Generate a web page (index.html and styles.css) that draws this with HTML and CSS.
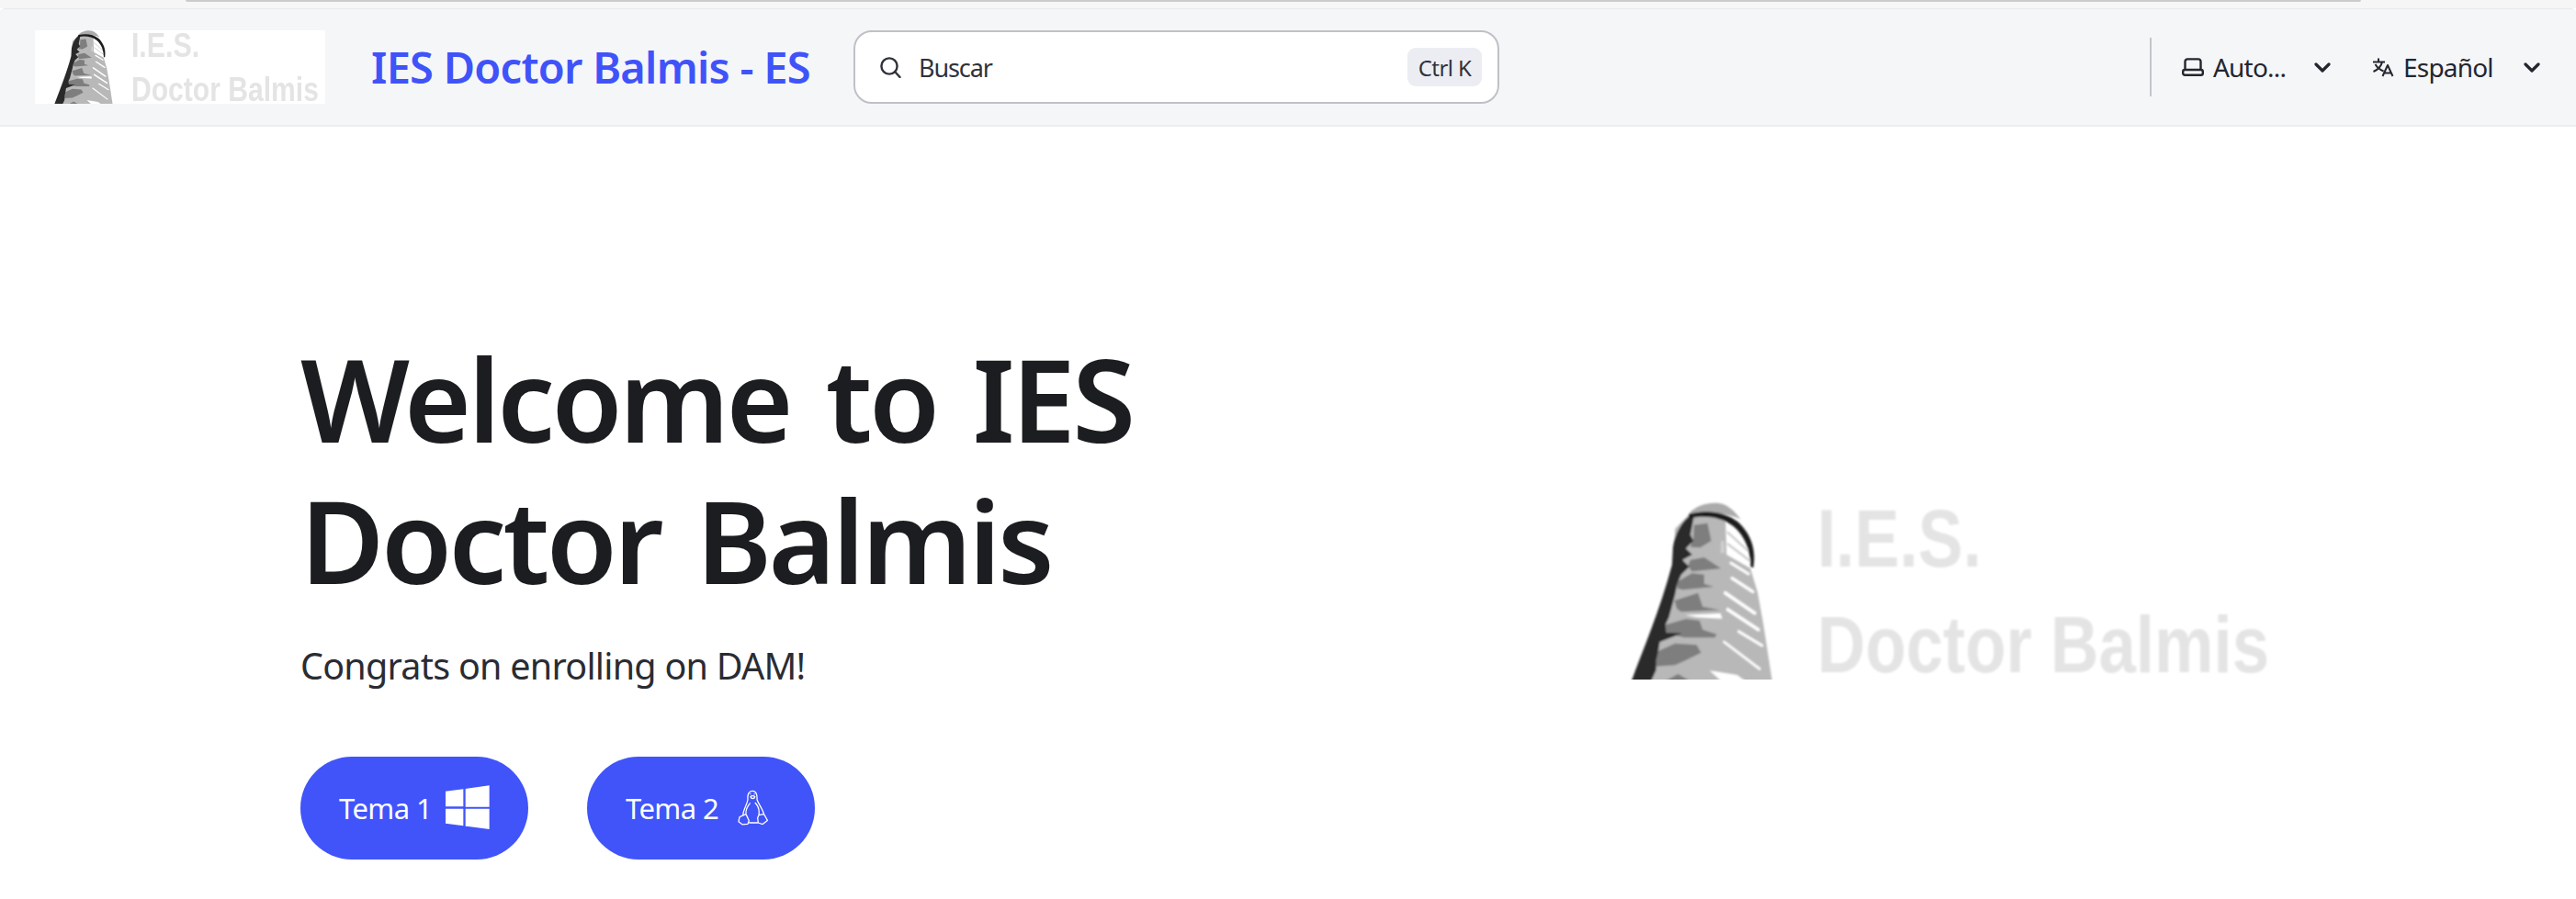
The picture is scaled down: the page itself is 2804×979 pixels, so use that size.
FILE: index.html
```html
<!DOCTYPE html>
<html lang="es">
<head>
<meta charset="utf-8">
<title>IES Doctor Balmis - ES</title>
<link rel="stylesheet" href="styles.css">
</head>
<body>
<svg class="defs" width="0" height="0" aria-hidden="true">
  <defs>
    <filter id="soft" x="-5%" y="-5%" width="110%" height="110%"><feGaussianBlur stdDeviation="3"/></filter>
    <filter id="softtext" x="-5%" y="-5%" width="110%" height="110%"><feGaussianBlur stdDeviation="1"/></filter>
    <symbol id="tower" viewBox="0 0 600 603">
      <g filter="url(#soft)">
        <path fill="#b8b8b8" d="M48 640 185 220 190 110 240 60 300 50 355 85 358 195 436 240 460 320 478 420 492 510 512 640Z"/>
        <path fill="#ababab" d="M238 58C262 30 320 18 352 32 372 42 392 60 404 80 360 58 290 55 238 72Z"/>
        <g fill="none" stroke="#c6c6c6" stroke-linecap="round">
          <path stroke-width="6" d="M362 122 428 182"/>
          <path stroke-width="6" d="M362 160 434 215"/>
        </g>
        <g fill="none" stroke="#fff" stroke-linecap="round">
          <path stroke-width="9" d="M372 222 430 258"/>
          <path stroke-width="10" d="M376 272 444 316"/>
          <path stroke-width="11" d="M354 320 450 386"/>
          <path stroke-width="11" d="M362 374 462 440"/>
          <path stroke-width="9" d="M398 446 474 492"/>
          <path stroke-width="8" d="M350 480 466 568"/>
        </g>
        <g fill="#fff">
          <path d="M303 574 392 588 425 612 345 612Z"/>
          <path d="M222 392 338 387 344 404 262 400Z"/>
        </g>
        <path fill="#cfcfcf" d="M340 150 350 150 352 190 338 190Z"/>
        <g fill="#7e7e7e">
          <path d="M252 98 296 92 308 150 272 172 240 170 250 140Z"/>
          <path d="M240 212 285 204 340 240 245 250 232 232Z"/>
          <path d="M195 285 245 256 285 260 285 290 316 300 215 310 198 305Z"/>
          <path d="M188 345 265 320 280 365 336 376 210 382 196 372Z"/>
          <path d="M155 425 225 405 270 410 280 440 326 455 320 466 220 466 165 452Z"/>
          <path d="M135 510 190 485 260 490 275 515 225 540 190 556 125 560 120 530Z"/>
          <path d="M150 612 200 585 245 612Z"/>
        </g>
        <path fill="#2b2b2b" d="M46 612C85 505 140 380 180 228L183 170C190 125 212 85 245 62L252 68 240 130 250 150 225 175 246 195 214 212 236 235 210 260 197 290 190 325 170 400 158 425 162 450 212 452 140 480 135 510 128 540 128 572 110 612Z"/>
        <path fill="#1c1c1c" d="M235 62C290 48 350 52 395 88 432 122 456 170 446 236L437 236C437 180 415 130 380 102 340 72 290 66 235 76Z"/>
      </g>
    </symbol>
  </defs>
</svg>

<div class="chrome-strip"><div class="chrome-line"></div></div>

<header class="navbar">
  <a class="brand-logo">
    <svg class="logo-small" viewBox="0 0 762 193" role="img" aria-label="Logo">
      <rect width="762" height="193" fill="#fff"/>
      <use href="#tower" x="35" y="-8" width="200" height="201"/>
      <g class="logo-text" filter="url(#softtext)">
        <text x="253" y="70" font-size="89" textLength="179" lengthAdjust="spacingAndGlyphs">I.E.S.</text>
        <text x="253" y="185" font-size="87" textLength="492" lengthAdjust="spacingAndGlyphs">Doctor Balmis</text>
      </g>
    </svg>
  </a>
  <span class="site-title">IES Doctor Balmis - ES</span>
  <div class="search">
    <svg class="search-icon" viewBox="0 0 24 24" aria-hidden="true"><circle cx="11" cy="11" r="8.6"/><path d="m17.5 17.5 5 5.5"/></svg>
    <span class="search-label">Buscar</span>
    <kbd class="search-key">Ctrl K</kbd>
  </div>
  <div class="nav-right">
    <div class="divider"></div>
    <div class="picker picker-theme">
      <svg class="laptop" viewBox="0 0 24 20" aria-hidden="true"><path d="M3.5 13V4a2.6 2.6 0 0 1 2.6-2.6h11.8A2.6 2.6 0 0 1 20.500 4v9"/><rect x="1.200" y="13" width="21.600" height="5.800" rx="2"/></svg>
      <span class="picker-text">Auto...</span>
      <svg class="chev" viewBox="0 0 18 11" aria-hidden="true"><path d="m2 2 7 7 7-7"/></svg>
    </div>
    <div class="picker picker-lang">
      <svg class="translate" viewBox="0 0 24 22" aria-hidden="true"><path d="M1 5.500h13M7 1.500v4M11 5.500C10 10 6 14 1.500 16M3.500 8c2 3.500 5 6 9 7.500M11.500 21 17 9l5.500 12M13.500 17.500h7"/></svg>
      <span class="picker-text">Español</span>
      <svg class="chev" viewBox="0 0 18 11" aria-hidden="true"><path d="m2 2 7 7 7-7"/></svg>
    </div>
  </div>
</header>

<main class="hero">
  <div class="hero-copy">
    <h1 class="hero-title">Welcome to IES<br>Doctor Balmis</h1>
    <p class="hero-sub">Congrats on enrolling on DAM!</p>
    <div class="hero-actions">
      <a class="btn">
        <span>Tema 1</span>
        <svg class="win" viewBox="75 80 144 144" aria-hidden="true"><path d="M75 100 133 93V150H75ZM140 92 218 81V151H140ZM75 157H133V213L75 205ZM140 157H218V224L140 214Z"/></svg>
      </a>
      <a class="btn btn-tux">
        <span>Tema 2</span>
        <svg class="tux" viewBox="72 62 102 118" aria-hidden="true"><path d="M90 146C90 130 103 112 106 94 104 76 110 65 122 65 134 65 138 78 137 94 142 110 156 125 160 143M100 142C98 128 106 115 114 105M143 145C146 128 138 112 130 104M85 149 100 143 110 165 106 176 88 178 75 168 78 153ZM143 146 160 143 165 151 172 164 156 177 141 172 139 156ZM110 172H140M115 84C118 80 127 80 130 84 128 92 118 94 115 84ZM115 74V77M128 74V77"/></svg>
      </a>
    </div>
  </div>
  <svg class="hero-image" viewBox="0 0 762 193" role="img" aria-label="IES Doctor Balmis">
    <use href="#tower" x="35" y="-8" width="200" height="201"/>
    <g class="logo-text" filter="url(#softtext)">
      <text x="253" y="70" font-size="89" textLength="179" lengthAdjust="spacingAndGlyphs">I.E.S.</text>
      <text x="253" y="185" font-size="87" textLength="492" lengthAdjust="spacingAndGlyphs">Doctor Balmis</text>
    </g>
  </svg>
</main>
</body>
</html>
```

FILE: styles.css
```css
* { box-sizing: border-box; }
html, body { margin: 0; height: 100%; }
body {
  height: 979px;
  overflow: hidden;
  background: #fff;
  color: #1c1d20;
  font-family: "Noto Sans", "Open Sans", sans-serif;
}
.defs { position: absolute; }

.chrome-strip { height: 9px; background: #f6f6f6; padding: 0 234px 0 202px; }
.chrome-line { height: 2px; background: #cbcbcb; border-radius: 0 0 6px 6px; }

.navbar {
  height: 129px;
  display: flex;
  align-items: center;
  padding: 0 39px 0 38px;
  background: #f5f6f8;
  border-top: 1px solid #e9e9ea;
  border-bottom: 2px solid #ebedf0;
  border-radius: 6px 6px 0 0;
}
.brand-logo { display: block; width: 316px; height: 80px; flex: none; }
.logo-small { display: block; width: 316px; height: 80px; overflow: visible; }
.logo-text { font-family: "Liberation Sans", sans-serif; font-weight: 700; fill: #e4e4e4; }
.site-title {
  margin-left: 50px;
  width: 476px;
  flex: none;
  font-size: 47px;
  font-weight: 600;
  letter-spacing: -0.75px;
  color: #4053f9;
  white-space: nowrap;
}
.search {
  margin-left: 49px;
  width: 703px;
  height: 80px;
  flex: none;
  display: flex;
  align-items: center;
  padding: 0 17px 0 26px;
  background: #fff;
  border: 2px solid #c0c1c6;
  border-radius: 20px;
}
.search-icon { width: 24px; height: 24px; flex: none; fill: none; stroke: #30323a; stroke-width: 2.4; stroke-linecap: round; }
.search-label { margin-left: 19px; font-size: 27px; letter-spacing: -1.1px; color: #30323a; }
.search-key {
  margin-left: auto;
  width: 81px;
  height: 42px;
  display: flex;
  align-items: center;
  justify-content: center;
  background: #ecedf2;
  border-radius: 9px;
  font-family: inherit;
  font-size: 24px;
  letter-spacing: -0.6px;
  color: #30323a;
}
.nav-right { margin-left: auto; display: flex; align-items: center; color: #23262f; }
.divider { width: 2px; height: 64px; background: #c4c5ca; margin-right: 33px; }
.picker { display: flex; align-items: center; }
.picker-text { font-size: 28px; letter-spacing: -0.8px; white-space: nowrap; }
.picker-theme .picker-text { width: 109px; margin-left: 10px; margin-right: 1px; }
.picker-lang { margin-left: 45px; }
.picker-lang .picker-text { width: 130px; margin-left: 10px; margin-right: 1px; }
.laptop { width: 24px; height: 20px; fill: none; stroke: #23262f; stroke-width: 2.4; }
.translate { width: 24px; height: 22px; fill: none; stroke: #23262f; stroke-width: 2; stroke-linejoin: round; }
.chev { width: 18px; height: 11px; fill: none; stroke: #23262f; stroke-width: 3.2; stroke-linecap: round; stroke-linejoin: round; }

.hero {
  display: flex;
  align-items: flex-start;
  padding: 219px 0 0 327px;
}
.hero-copy { width: 1398px; flex: none; }
.hero-title {
  margin: 0;
  font-size: 125px;
  line-height: 154px;
  font-weight: 600;
  letter-spacing: -3.6px;
  word-spacing: 10px;
  color: #1c1d20;
}
.hero-sub {
  margin: 31px 0 0;
  font-size: 39.5px;
  line-height: 58px;
  letter-spacing: -0.75px;
  color: #2a2c33;
}
.hero-actions { display: flex; gap: 64px; margin-top: 70px; }
.btn {
  width: 248px;
  height: 112px;
  display: flex;
  align-items: center;
  padding-left: 42px;
  border-radius: 56px;
  background: #4054f9;
  color: #fff;
  font-size: 31px;
  letter-spacing: -0.6px;
  white-space: nowrap;
}
.btn span { width: 116px; flex: none; }
.win { width: 48px; height: 48px; flex: none; fill: #fff; margin-bottom: 2px; }
.btn-tux span { width: 122px; }
.tux { width: 33px; height: 39px; flex: none; fill: none; stroke: #fff; stroke-width: 4; stroke-linejoin: round; margin-bottom: 2px; }
.hero-image { display: block; width: 762px; height: 193px; flex: none; margin-top: 190px; overflow: visible; }
```
